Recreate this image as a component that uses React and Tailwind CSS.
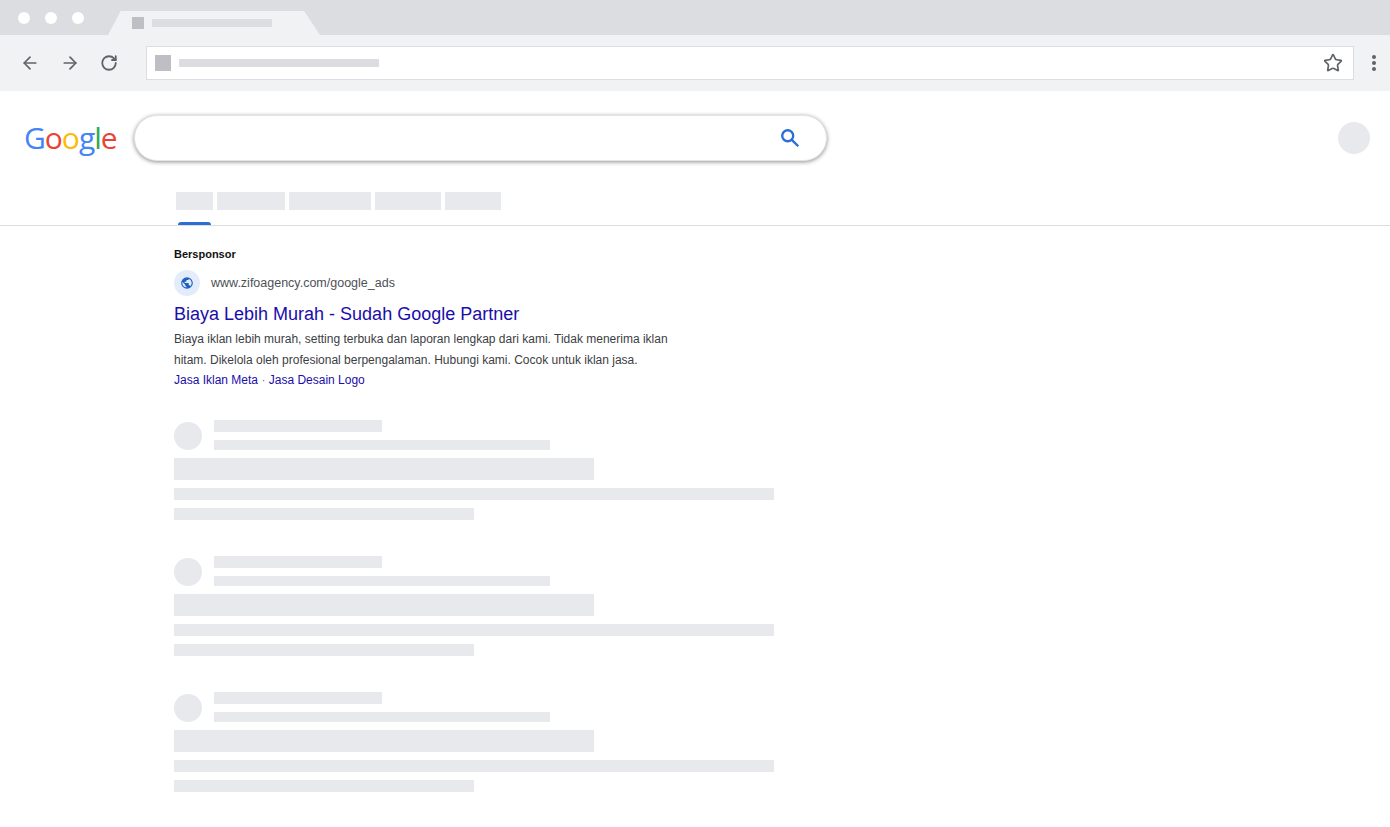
import React from 'react';
import { ArrowLeft, ArrowRight, RotateCw, Star } from 'lucide-react';

const tabs = ['w-[37px]', 'w-[68px]', 'w-[82px]', 'w-[66px]', 'w-[56px]'];

function Skeleton() {
  return (
    <div className="mb-[36px] w-[600px]">
      <div className="flex h-[30px] items-center gap-3">
        <div className="mt-px h-7 w-7 rounded-full bg-[#e8e9ed]" />
        <div>
          <div className="h-3 w-[168px] bg-[#e8e9ed]" />
          <div className="mt-2 h-2.5 w-[336px] bg-[#e8e9ed]" />
        </div>
      </div>
      <div className="mt-2 h-[22px] w-[420px] bg-[#e8e9ed]" />
      <div className="mt-2 h-3 w-[600px] bg-[#e8e9ed]" />
      <div className="mt-2 h-3 w-[300px] bg-[#e8e9ed]" />
    </div>
  );
}

function GoogleLogo() {
  return (
    <div className="w-[134px] pl-6 font-['Open_Sans',sans-serif] text-[30px] leading-none tracking-[-1px]">
      <span className="text-[#4285f4]">G</span>
      <span className="text-[#ea4335]">o</span>
      <span className="text-[#fbbc05]">o</span>
      <span className="text-[#4285f4]">g</span>
      <span className="text-[#34a853]">l</span>
      <span className="text-[#ea4335]">e</span>
    </div>
  );
}

export default function App() {
  return (
    <div className="h-[827px] w-[1390px] overflow-hidden bg-white font-['Liberation_Sans',Arial,sans-serif]">
      {/* tab strip */}
      <div className="flex h-[35px] bg-[#dcdde1] pl-[18px]">
        <div className="flex h-[35px] items-center gap-[15px]">
          <span className="h-3 w-3 rounded-full bg-white" />
          <span className="h-3 w-3 rounded-full bg-white" />
          <span className="h-3 w-3 rounded-full bg-white" />
        </div>
        <div className="ml-[24px] mt-[11px] flex h-6 w-[212px] items-start bg-[#f1f2f4] pl-6 pt-[6px] [clip-path:polygon(6%_0,92.5%_0,100%_100%,0_100%)]">
          <span className="h-3 w-3 bg-[#bdbfc4]" />
          <span className="ml-2 mt-[2px] h-2 w-[120px] bg-[#dcdde1]" />
        </div>
      </div>

      {/* toolbar */}
      <div className="flex h-[56px] items-center bg-[#f1f2f4] pl-5 pr-3">
        <div className="flex w-[126px] items-center gap-5 text-[#5f6368]">
          <ArrowLeft size={20} strokeWidth={2} />
          <ArrowRight size={20} strokeWidth={2} />
          <RotateCw size={18} strokeWidth={2.4} />
        </div>
        <div className="flex h-[34px] w-[1208px] items-center border border-[#dcdde1] bg-white pl-2 pr-[10px]">
          <span className="h-4 w-4 bg-[#bdbfc4]" />
          <span className="ml-2 h-2 w-[200px] bg-[#dcdde1]" />
          <Star className="ml-auto text-[#5f6368]" size={20} strokeWidth={2} />
        </div>
        <div className="ml-[18px] flex flex-col gap-[2px]">
          <span className="h-1 w-1 rounded-full bg-[#5f6368]" />
          <span className="h-1 w-1 rounded-full bg-[#5f6368]" />
          <span className="h-1 w-1 rounded-full bg-[#5f6368]" />
        </div>
      </div>

      {/* search header */}
      <div className="flex items-center pt-6">
        <GoogleLogo />
        <div className="flex h-[46px] w-[693px] items-center justify-end rounded-full border border-[#e4e4e6] bg-white pr-[25px] shadow-[0_1px_4px_rgba(0,0,0,0.45)]">
          <svg width="22" height="22" viewBox="0 0 24 24" fill="none" stroke="#2a6fd6" strokeWidth="2.6">
            <circle cx="9.5" cy="9.5" r="6" />
            <path d="M14 14l7 7" />
          </svg>
        </div>
        <div className="ml-auto mr-5 h-8 w-8 rounded-full bg-[#e8e9ed]" />
      </div>

      {/* search tabs */}
      <div className="relative mt-[31px] h-[34px] border-b border-[#dadce0] pl-[176px]">
        <div className="flex gap-1">
          {tabs.map((w) => (
            <div key={w} className={`h-[18px] bg-[#e8e9ed] ${w}`} />
          ))}
        </div>
        <div className="absolute bottom-0 left-[178px] h-[3px] w-[33px] rounded-t-sm bg-[#2a6fd6]" />
      </div>

      {/* results */}
      <div className="pl-[174px]">
        <div className="mt-[21px] text-[11px] font-bold leading-[14px] text-[#111]">Bersponsor</div>
        <div className="mt-[9px] flex h-[26px] items-center">
          <div className="flex h-[26px] w-[26px] items-center justify-center rounded-full bg-[#e3ecfb]">
            <svg width="14" height="14" viewBox="0 0 24 24" fill="#1f5fbf">
              <path d="M12 2a10 10 0 1 0 0 20 10 10 0 0 0 0-20zm-1 17.9A8 8 0 0 1 4.2 10.2L9 15v1a2 2 0 0 0 2 2v1.9zm6.9-2.5A2 2 0 0 0 16 16h-1v-3a1 1 0 0 0-1-1H8v-2h2a1 1 0 0 0 1-1V7h2a2 2 0 0 0 2-2v-.4a8 8 0 0 1 2.9 12.8z" />
            </svg>
          </div>
          <span className="ml-[11px] text-[12.5px] text-[#4d5156]">www.zifoagency.com/google_ads</span>
        </div>
        <div className="mt-[3px] text-[18px] leading-[30px] text-[#1a0dab]">Biaya Lebih Murah - Sudah Google Partner</div>
        <p className="w-[560px] text-[12px] leading-[21px] text-[#3c4043]">
          Biaya iklan lebih murah, setting terbuka dan laporan lengkap dari kami. Tidak menerima iklan
          <br />
          hitam. Dikelola oleh profesional berpengalaman. Hubungi kami. Cocok untuk iklan jasa.
        </p>
        <div className="text-[12px] leading-[19px] text-[#1a0dab]">
          Jasa Iklan Meta <span className="text-[#70757a]">·</span> Jasa Desain Logo
        </div>
        <div className="mt-[30px]">
          <Skeleton />
          <Skeleton />
          <Skeleton />
        </div>
      </div>
    </div>
  );
}
